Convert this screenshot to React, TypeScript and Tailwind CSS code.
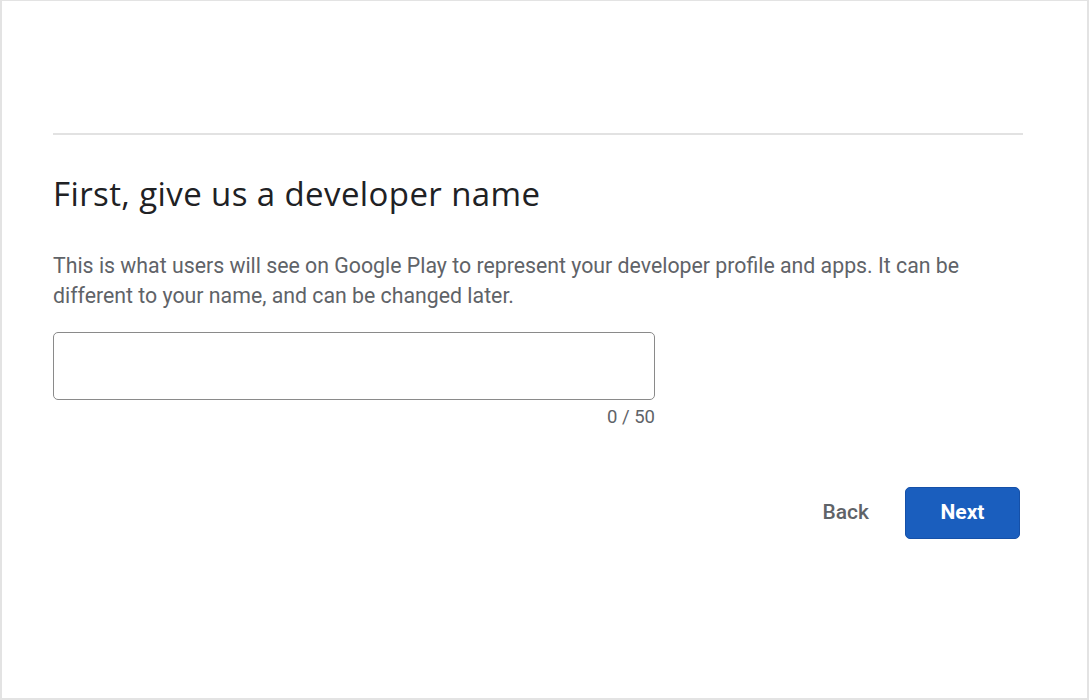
import React from "react";

export default function App() {
  return (
    <div className="w-[1089px] h-[700px] bg-white border-2 border-[#e3e3e3] border-t-[1px] box-border" style={{ fontFamily: "Roboto, 'Liberation Sans', sans-serif" }}>
      <div className="pl-[51px] pr-[64px] pt-[132px]">
        <div className="h-[2px] bg-[#e2e2e2]" />
        <h1 className="mt-[39px] text-[33px] leading-[40px] tracking-[0.4px] text-[#202124] font-normal" style={{ fontFamily: "'Open Sans', Roboto, sans-serif" }}>
          First, give us a developer name
        </h1>
        <p className="mt-[37px] text-[21.3px] leading-[30px] text-[#5f6368] w-[930px]">
          This is what users will see on Google Play to represent your developer profile and apps. It can be different to your name, and can be changed later.
        </p>
        <div className="w-[602px] mt-[21px]">
          <input className="block w-full h-[68px] rounded-[5px] border-[1.5px] border-[#8a8a8a] outline-none px-4 text-[17px]" />
          <div className="text-right text-[18.5px] text-[#5f6368] mt-[7px] leading-[20px]">0 / 50</div>
        </div>
        <div className="flex justify-end items-center mt-[60px] pr-[3px] gap-[36px]">
          <button className="text-[21px] font-medium text-[#5f6368]">Back</button>
          <button className="w-[115px] h-[52px] rounded-[5px] bg-[#1a5ebe] text-white text-[21px] font-bold border border-[#1550a8]">Next</button>
        </div>
      </div>
    </div>
  );
}
